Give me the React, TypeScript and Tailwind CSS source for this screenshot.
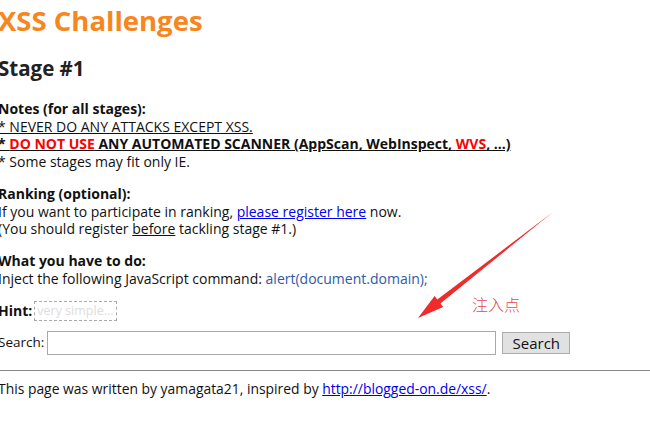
import React from 'react';

const font = { fontFamily: '"Open Sans", "Noto Sans", sans-serif' };

export default function App() {
  return (
    <div className="relative w-[650px] h-[424px] overflow-hidden bg-white text-[#111] text-[14px] leading-[17.7px]" style={font}>
      <div className="ml-[-2px]">
        <h1 className="text-[27.5px] leading-[34px] font-bold text-[#f7861c] pt-[4px]">XSS Challenges</h1>
        <h2 className="text-[20.5px] leading-[28px] font-bold text-[#222] mt-[16px]">Stage #1</h2>

        <div className="mt-[18px]">
          <b>Notes (for all stages):</b>
          <br />
          <span className="underline">* NEVER DO ANY ATTACKS EXCEPT XSS.</span>
          <br />
          <span className="underline font-bold">
            * <span className="text-[#ff0000]">DO NOT USE</span> ANY AUTOMATED SCANNER (AppScan, WebInspect,{' '}
            <span className="text-[#ff0000]">WVS</span>, ...)
          </span>
          <br />* Some stages may fit only IE.
        </div>

        <div className="mt-[14px]">
          <b>Ranking (optional):</b>
          <br />
          If you want to participate in ranking,{' '}
          <a href="#" className="text-[#0000ee] underline">please register here</a> now.
          <br />
          (You should register <span className="underline">before</span> tackling stage #1.)
        </div>

        <div className="mt-[14px]">
          <b>What you have to do:</b>
          <br />
          Inject the following JavaScript command: <span className="text-[#2d5aa8]">alert(document.domain);</span>
        </div>

        <div className="mt-[14px] flex items-center gap-[2px]">
          <b>Hint:</b>
          <span className="border border-dashed border-[#aaa] px-[2px] h-[20px] leading-[18px] text-[#ddd] text-[12.5px]">
            very simple...
          </span>
        </div>

        <div className="mt-[10px] flex items-center">
          <span className="text-[13.5px]">Search:</span>
          <input type="text" className="ml-[3px] w-[449px] h-[24px] border border-[#a9a9a9] bg-white outline-none" />
          <button className="ml-[6px] w-[68px] h-[22px] border border-[#adadad] bg-[#e1e1e1] text-[15px] leading-[20px] text-[#111]">
            Search
          </button>
        </div>
      </div>

      <hr className="mt-[15px] border-0 border-t border-[#888]" />
      <div className="ml-[-2px] mt-[9px] text-[13.9px]">
        This page was written by yamagata21, inspired by{' '}
        <a href="#" className="text-[#0000ee] underline">http://blogged-on.de/xss/</a>.
      </div>

      <svg className="absolute left-0 top-0" width="650" height="424" viewBox="0 0 650 424">
        <polygon
          points="553,212 440.4,303.6 443.2,307.1 418,318 434.6,296.1 437.3,299.6"
          fill="#ef2b2b"
        />
      </svg>
      <div
        className="absolute left-[472px] top-[294px] text-[16px] leading-[20px] text-[#e5484d]"
        style={{ fontFamily: '"Noto Sans CJK SC", sans-serif', fontWeight: 300 }}
      >
        注入点
      </div>
    </div>
  );
}
